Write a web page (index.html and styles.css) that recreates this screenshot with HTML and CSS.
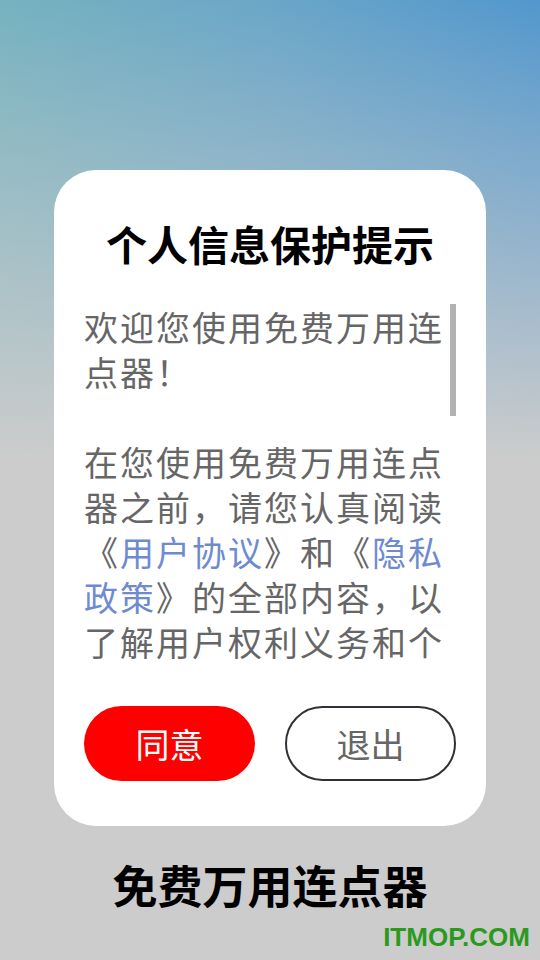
FILE: index.html
```html
<html lang="zh-CN">
  <head>
    <meta charset="UTF-8" />
    <meta name="viewport" content="width=device-width, initial-scale=1.0" />
    <title>免费万用连点器</title>
    <link rel="stylesheet" href="styles.css">
  </head>
  <body>
    <div class="page">
      <div class="dialog">
        <h1 class="dialog-title">个人信息保护提示</h1>
        <div class="dialog-body">
          <div class="dialog-text">
            <p>欢迎您使用免费万用连点器！</p>
            <p>
              在您使用免费万用连点器之前，请您认真阅读《<a href="#">用户协议</a>》和《<a href="#">隐私政策</a>》的全部内容，以了解用户权利义务和个人信息处理规则。
            </p>
          </div>
          <div class="scroll-track">
            <div class="scroll-thumb"></div>
          </div>
        </div>
        <div class="dialog-actions">
          <button class="btn btn-agree" type="button">同意</button>
          <button class="btn btn-exit" type="button">退出</button>
        </div>
      </div>
      <div class="app-name">免费万用连点器</div>
    </div>
    <div class="watermark">ITMOP.COM</div>
  </body>
</html>
```

FILE: styles.css
```css
body {
  font-family: "Noto Sans CJK SC", "Noto Sans", sans-serif;
  margin: 0;
  width: 540px;
  height: 960px;
  overflow: hidden;
  position: relative;
  background-color: #cccccc;
  background-image:
    linear-gradient(to bottom, rgba(204, 204, 204, 0) 0, rgba(204, 204, 204, 0.35) 150px, #cccccc 460px),
    linear-gradient(to right, #76b2bf 0, #6aa6c8 50%, #5297cd 100%);
  background-repeat: no-repeat;
}
.page {
  display: flex;
  flex-direction: column;
  align-items: center;
  padding-top: 170px;
}
.dialog {
  width: 432px;
  box-sizing: border-box;
  background-color: white;
  border-radius: 42px;
  padding: 48px 30px 45px 30px;
}
.dialog-title {
  margin: 0;
  font-size: 41px;
  line-height: 50px;
  font-weight: bold;
  color: #000;
  text-align: center;
}
.dialog-body {
  display: flex;
  gap: 4px;
  height: 360px;
  margin-top: 36px;
  overflow: hidden;
}
.dialog-text {
  width: 362px;
  flex-shrink: 0;
  font-size: 34px;
  line-height: 45px;
  letter-spacing: 2px;
  color: #666666;
}
.dialog-text p {
  margin: 0 0 45px 0;
}
.dialog-text a {
  color: #6f8bd0;
  text-decoration: none;
}
.scroll-track {
  width: 6px;
  margin-top: -3px;
}
.scroll-thumb {
  height: 115px;
  background-color: #b3b3b3;
}
.dialog-actions {
  display: flex;
  justify-content: space-between;
  margin-top: 42px;
}
.btn {
  width: 171px;
  height: 75px;
  border-radius: 38px;
  font-family: "Noto Sans CJK SC", "Noto Sans", sans-serif;
  font-size: 34px;
  line-height: 40px;
  padding: 0;
  cursor: pointer;
  box-sizing: border-box;
}
.btn-agree {
  background-color: #ff0000;
  color: white;
  border: none;
}
.btn-exit {
  background-color: white;
  color: #666666;
  border: 2px solid #2e3236;
}
.app-name {
  margin-top: 29px;
  font-size: 45px;
  line-height: 60px;
  font-weight: bold;
  color: #000;
}
.watermark {
  position: absolute;
  right: 10px;
  bottom: 10px;
  font-family: "Liberation Sans", Arial, sans-serif;
  font-weight: bold;
  font-size: 26px;
  line-height: 26px;
  color: #2a9a1c;
}
```
